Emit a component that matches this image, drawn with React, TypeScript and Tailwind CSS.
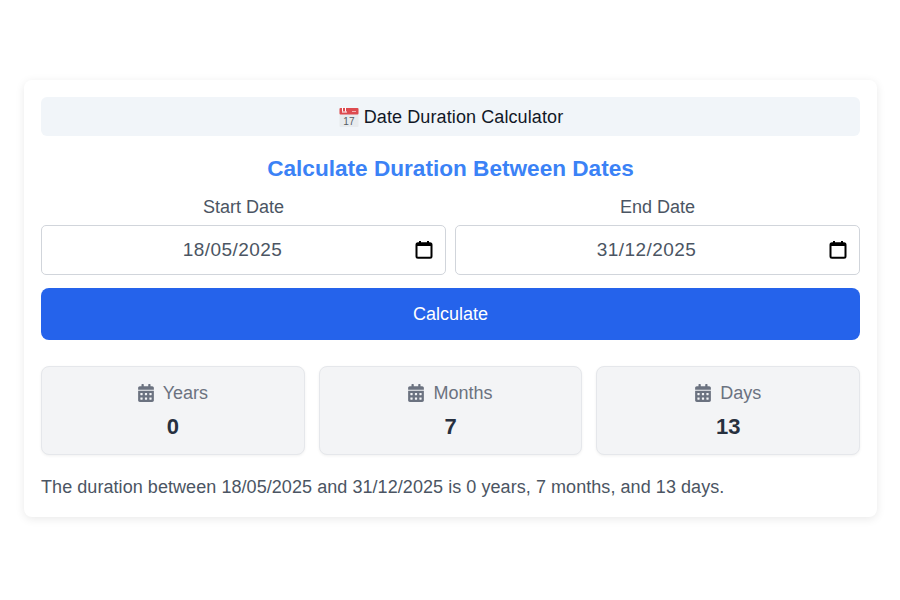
import { FaCalendarAlt } from "react-icons/fa"

function CalendarEmoji() {
  return (
    <svg width="20" height="20" viewBox="0 0 20 20" className="shrink-0">
      <rect x="0.5" y="1" width="19" height="19" rx="1" fill="#e8ebee" />
      <rect x="0.5" y="1" width="19" height="6.5" rx="1" fill="#dd4a4f" />
      <rect x="3" y="0.5" width="1" height="4" fill="#fff" />
      <rect x="6" y="0.5" width="1" height="4" fill="#fff" />
      <rect x="3" y="4.5" width="5" height="1" fill="#fff" />
      <rect x="13" y="4" width="4" height="1" fill="#f3b0b2" />
      <text x="10" y="17.5" textAnchor="middle" fontSize="10" fill="#555b63" fontFamily="Liberation Sans">17</text>
    </svg>
  )
}

function DateField({ label, value }: { label: string; value: string }) {
  return (
    <div className="flex-1 flex flex-col">
      <div className="text-[18px] leading-[20px] text-[#4b5563] text-center mb-[8px]">{label}</div>
      <div className="h-[50px] flex items-center border border-[#d1d5db] rounded-[5px] pl-[8px] pr-[12px] bg-white">
        <span className="flex-1 pt-[1px] text-center text-[19px] text-[#4b5563] tracking-[0.45px]">{value}</span>
        <svg width="18" height="20" viewBox="0 0 18 20" fill="none" className="shrink-0 text-black">
          <rect x="1.5" y="3.2" width="15" height="14.6" rx="1.5" stroke="currentColor" strokeWidth="2" />
          <rect x="1" y="3" width="16" height="3" fill="currentColor" />
          <rect x="4" y="1" width="2" height="3" fill="currentColor" />
          <rect x="12" y="1" width="2" height="3" fill="currentColor" />
        </svg>
      </div>
    </div>
  )
}

function Stat({ label, value }: { label: string; value: string }) {
  return (
    <div className="flex-1 h-[89px] bg-[#f3f4f6] border border-[#e5e7eb] rounded-[8px] shadow-[0_1px_3px_rgba(0,0,0,0.06)] flex flex-col items-center pt-[14px]">
      <div className="flex items-center gap-[9px] text-[#6b7280] text-[18px] leading-[24px]">
        <FaCalendarAlt className="w-[16px] h-[18px]" />
        <span>{label}</span>
      </div>
      <div className="mt-[8px] text-[22px] leading-[28px] font-bold text-[#27303f]">{value}</div>
    </div>
  )
}

export default function App() {
  return (
    <div className="min-h-screen bg-white pt-[80px] pl-[24px] pr-[23px] font-['Liberation_Sans',Arial,sans-serif]">
      <div className="w-full bg-white rounded-[8px] shadow-[0_2px_10px_rgba(0,0,0,0.09)] p-[17px] pb-[18px]">
        {/* Title bar */}
        <div className="h-[39px] bg-[#f1f5f9] rounded-[6px] flex items-center justify-center gap-[5px] pl-[1px] text-[18px] text-[#111827] tracking-[0.1px]">
          <CalendarEmoji />
          <span className="pt-[1px]">Date Duration Calculator</span>
        </div>

        <h2 className="mt-[19px] text-center text-[22.6px] leading-[28px] font-bold text-[#3b82f6]">
          Calculate Duration Between Dates
        </h2>

        <div className="mt-[14px] flex gap-[9px]">
          <DateField label="Start Date" value="18/05/2025" />
          <DateField label="End Date" value="31/12/2025" />
        </div>

        <button className="mt-[13px] w-full h-[52px] bg-[#2563eb] text-white text-[18px] rounded-[8px]">Calculate</button>

        <div className="mt-[26px] flex gap-[14px]">
          <Stat label="Years" value="0" />
          <Stat label="Months" value="7" />
          <Stat label="Days" value="13" />
        </div>

        <p className="mt-[20px] text-[18px] leading-[24px] text-[#4b5563] tracking-[0.06px]">
          The duration between 18/05/2025 and 31/12/2025 is 0 years, 7 months, and 13 days.
        </p>
      </div>
    </div>
  )
}
